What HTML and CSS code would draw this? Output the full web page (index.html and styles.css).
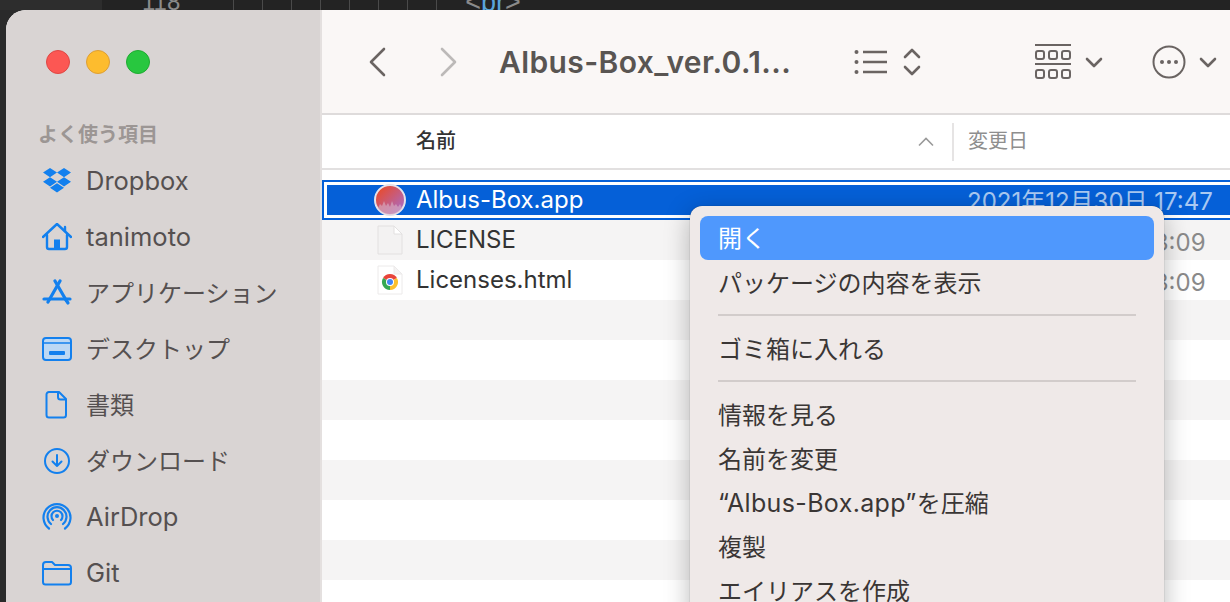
FILE: index.html
```html
<!DOCTYPE html>
<html lang="ja">
<head>
  <meta charset="UTF-8" />
  <title>Albus-Box_ver.0.1</title>
  <link rel="stylesheet" href="styles.css">
</head>
<body>

  <!-- editor behind the window, only its last line shows -->
  <div class="behind">
    <div class="gutter"></div>
    <span class="line-no">118</span>
    <span class="guides"><i></i><i></i><i></i><i></i><i></i><i></i><i></i><i></i></span>
    <span class="code">&lt;<b>br</b>&gt;</span>
  </div>

  <div class="window">
    <aside class="sidebar">
      <div class="lights">
        <span class="light red"></span>
        <span class="light yellow"></span>
        <span class="light green"></span>
      </div>
      <div class="side-title">よく使う項目</div>

      <div class="side-item latin">
        <svg class="side-icon" viewBox="0 0 30 28"><path fill="#1380ee" d="M8 1 15 5.600 8 10.200 1 5.600zM22 1 29 5.600 22 10.200 15 5.600zM8 10.200 15 14.800 8 19.400 1 14.800zM22 10.200 29 14.800 22 19.400 15 14.800zM15 16.200 22 20.800 15 25.400 8 20.800z"/></svg>
        <span class="label">Dropbox</span>
      </div>
      <div class="side-item latin">
        <svg class="side-icon" viewBox="0 0 30 28"><g fill="none" stroke="#1380ee" stroke-width="2.400" stroke-linecap="round" stroke-linejoin="round"><path d="M1 14 15 1 29 14"/><path d="M23 4v4"/><path d="M5 12v12a2 2 0 0 0 2 2h16a2 2 0 0 0 2-2V12"/></g><path fill="#1380ee" d="M12 16.500h6V26h-6z"/></svg>
        <span class="label">tanimoto</span>
      </div>
      <div class="side-item">
        <svg class="side-icon" viewBox="0 0 30 28"><g fill="none" stroke="#1380ee" stroke-width="3.200" stroke-linecap="round"><path d="M13 2 24 21"/><path d="M18 2 6 23"/><path d="M2 20h26"/><path d="M24 21l2 3"/></g></svg>
        <span class="label">アプリケーション</span>
      </div>
      <div class="side-item">
        <svg class="side-icon" viewBox="0 0 30 28"><rect x="1" y="3" width="28" height="22" rx="3" fill="#bcd8f4" stroke="#1380ee" stroke-width="2"/><path d="M2 8h26" stroke="#1380ee" stroke-width="1.500"/><rect x="7" y="16" width="16" height="4" rx="1" fill="#1380ee"/></svg>
        <span class="label">デスクトップ</span>
      </div>
      <div class="side-item">
        <svg class="side-icon" viewBox="0 0 30 28"><g fill="none" stroke="#1380ee" stroke-width="2" stroke-linejoin="round"><path d="M7 1h10l7 7v16a2.500 2.500 0 0 1-2.500 2.500h-14.500a2.500 2.500 0 0 1-2.500-2.500V3.500a2.500 2.500 0 0 1 2.500-2.500z"/><path d="M16 1v5a2.500 2.500 0 0 0 2.500 2.500H24"/></g></svg>
        <span class="label">書類</span>
      </div>
      <div class="side-item">
        <svg class="side-icon" viewBox="0 0 30 28"><g fill="none" stroke="#1380ee" stroke-width="2" stroke-linecap="round" stroke-linejoin="round"><circle cx="15" cy="14" r="12"/><path d="M15 8v11M10.500 14.500 15 19l4.500-4.500"/></g></svg>
        <span class="label">ダウンロード</span>
      </div>
      <div class="side-item latin">
        <svg class="side-icon" viewBox="0 0 30 28"><g fill="none" stroke="#1380ee" stroke-width="2.200" stroke-linecap="round"><path d="M7 25.500a13.500 13.500 0 1 1 16 0"/><path d="M9 21a9.500 9.500 0 1 1 12 0"/><path d="M11 17a5.500 5.500 0 1 1 8 0"/></g><circle cx="15" cy="13" r="2" fill="#1380ee"/></svg>
        <span class="label">AirDrop</span>
      </div>
      <div class="side-item latin">
        <svg class="side-icon" viewBox="0 0 30 28"><g fill="none" stroke="#1380ee" stroke-width="2" stroke-linejoin="round"><path d="M1 6a3 3 0 0 1 3-3h6l3 3h13a3 3 0 0 1 3 3v14a2.500 2.500 0 0 1-2.500 2.500h-23a2.500 2.500 0 0 1-2.500-2.500z"/><path d="M1 10h28"/></g></svg>
        <span class="label">Git</span>
      </div>
    </aside>

    <main class="main">
      <div class="toolbar">
        <svg class="tool nav-back" viewBox="0 0 18 30"><path d="M16 2 3 15l13 13"/></svg>
        <svg class="tool nav-next" viewBox="0 0 18 30"><path d="M2 2l13 13L2 28"/></svg>
        <div class="folder-title">Albus-Box_ver.0.1...</div>

        <svg class="tool-fill list-view" viewBox="0 0 34 26">
          <circle cx="2.500" cy="3" r="2"/><circle cx="2.500" cy="13" r="2"/><circle cx="2.500" cy="23" r="2"/>
          <path d="M9 1.800h24v2.400H9zM9 11.800h24v2.400H9zM9 21.800h24v2.400H9z"/>
        </svg>
        <svg class="tool updown" viewBox="0 0 18 30"><path d="M2 10l7-7 7 7M2 20l7 7 7-7"/></svg>

        <svg class="tool-fill grid-view" viewBox="0 0 36 36">
          <path d="M0 0h36v2H0zM0 19h36v2H0z"/>
          <g fill="none" stroke="#6a6462" stroke-width="2">
            <rect x="1" y="7" width="8" height="8" rx="2"/><rect x="14" y="7" width="8" height="8" rx="2"/><rect x="27" y="7" width="8" height="8" rx="2"/>
            <rect x="1" y="26" width="8" height="8" rx="2"/><rect x="14" y="26" width="8" height="8" rx="2"/><rect x="27" y="26" width="8" height="8" rx="2"/>
          </g>
        </svg>
        <svg class="tool chev first-chev" viewBox="0 0 18 12"><path d="M2 2l7 7 7-7"/></svg>

        <svg class="tool-fill more" viewBox="0 0 34 34">
          <circle cx="17" cy="17" r="15.500" fill="none" stroke="#6a6462" stroke-width="2"/>
          <circle cx="10" cy="17" r="2"/><circle cx="17" cy="17" r="2"/><circle cx="24" cy="17" r="2"/>
        </svg>
        <svg class="tool chev last-chev" viewBox="0 0 18 12"><path d="M2 2l7 7 7-7"/></svg>
      </div>

      <div class="col-head">
        <div class="col-name">名前</div>
        <svg class="sort" viewBox="0 0 16 10"><path d="M1 8.500 8 1.500l7 7"/></svg>
        <div class="col-date">変更日</div>
      </div>

      <div class="rows">
        <div class="row selected">
          <div class="file-icon">
            <svg width="32" height="32" viewBox="0 0 32 32">
              <defs>
                <linearGradient id="appfill" x1="0" y1="0" x2="1" y2="1">
                  <stop offset="0.100" stop-color="#ea4a28"/>
                  <stop offset="0.900" stop-color="#a86cc8"/>
                </linearGradient>
              </defs>
              <circle cx="16" cy="16" r="15" fill="url(#appfill)" stroke="#e6e2ea" stroke-width="2"/>
              <path fill="#d9b3c4" opacity="0.600" d="M4 24l2-4 2 2 2-5 2 5 2-3 2 4 2-6 2 5 2-2 2 3 2-3 2 4a14 14 0 0 1-24 0z"/>
            </svg>
          </div>
          <div class="file-name">Albus-Box.app</div>
          <div class="file-date">2021年12月30日 17:47</div>
        </div>
        <div class="row odd">
          <div class="file-icon">
            <svg width="32" height="30" viewBox="0 0 32 30">
              <path d="M4 1h16l8 8v20H4z" fill="#f3f2f2" stroke="#e2e0e0"/>
              <path d="M20 1v8h8z" fill="#fff" stroke="#e2e0e0"/>
            </svg>
          </div>
          <div class="file-name">LICENSE</div>
          <div class="file-date">2021年11月13日 13:09</div>
        </div>
        <div class="row">
          <div class="file-icon">
            <svg width="32" height="30" viewBox="0 0 32 30">
              <path d="M4 1h16l8 8v20H4z" fill="#fff" stroke="#eceaea"/>
              <path d="M20 1v8h8z" fill="#f4f3f3" stroke="#eceaea"/>
              <path d="M16 17 9.070 13A8 8 0 0 1 22.930 13z" fill="#e8443a"/>
              <path d="M16 17 22.930 13A8 8 0 0 1 16 25z" fill="#fbc02d"/>
              <path d="M16 17 16 25A8 8 0 0 1 9.070 13z" fill="#35a853"/>
              <circle cx="16" cy="17" r="4" fill="#fff"/>
              <circle cx="16" cy="17" r="3" fill="#4285f4"/>
            </svg>
          </div>
          <div class="file-name">Licenses.html</div>
          <div class="file-date">2021年11月13日 13:09</div>
        </div>
        <div class="row odd"></div>
        <div class="row"></div>
        <div class="row odd"></div>
        <div class="row"></div>
        <div class="row odd"></div>
        <div class="row"></div>
        <div class="row odd"></div>
        <div class="row"></div>
      </div>

      <div class="menu">
        <div class="menu-item active">開く</div>
        <div class="menu-item">パッケージの内容を表示</div>
        <div class="menu-sep"></div>
        <div class="menu-item">ゴミ箱に入れる</div>
        <div class="menu-sep"></div>
        <div class="menu-item">情報を見る</div>
        <div class="menu-item">名前を変更</div>
        <div class="menu-item"><span class="menu-latin">“Albus-Box.app”</span>を圧縮</div>
        <div class="menu-item">複製</div>
        <div class="menu-item">エイリアスを作成</div>
      </div>
    </main>
  </div>

</body>
</html>
```

FILE: styles.css
```css
* {
  box-sizing: border-box;
}
html, body {
  height: 100%;
}
body {
  margin: 0;
  background: #2a2a2a;
  font-family: Inter, "Noto Sans CJK JP", sans-serif;
  overflow: hidden;
}

/* editor strip */
.behind {
  height: 10px;
  display: flex;
  align-items: flex-end;
  overflow: hidden;
  background: #232323;
  font-family: "Liberation Sans", sans-serif;
  font-size: 24px;
  color: #8b8b8b;
}
.gutter {
  width: 102px;
  height: 10px;
  flex-shrink: 0;
  background: #2d2d2d;
}
.line-no, .code {
  line-height: 28px;
  height: 28px;
  margin-bottom: -6px;
  flex-shrink: 0;
}
.line-no {
  margin-left: 40px;
}
.guides {
  display: flex;
  margin-left: 53px;
  align-self: stretch;
}
.guides i {
  width: 1px;
  margin-right: 28px;
  background: #4a4a4a;
}
.code {
  font-size: 27px;
  color: #8a8a8a;
}
.code b {
  font-weight: 400;
  color: #5aa5dc;
}

/* finder window */
.window {
  display: flex;
  height: 592px;
  margin-left: 6px;
  border-top-left-radius: 20px;
  overflow: hidden;
  background: #fff;
}
.sidebar {
  width: 316px;
  flex-shrink: 0;
  padding-left: 33px;
  background: #d9d4d3;
  border-right: 2px solid #e4e0df;
}
.lights {
  display: flex;
  gap: 16px;
  padding-top: 40px;
  margin-left: 7px;
}
.light {
  width: 24px;
  height: 24px;
  border-radius: 50%;
}
.light.red {
  background: #fc5753;
  border: 1px solid #df4744;
}
.light.yellow {
  background: #fdbc2e;
  border: 1px solid #de9f34;
}
.light.green {
  background: #28c73f;
  border: 1px solid #1fab31;
}
.side-title {
  margin-top: 47px;
  margin-left: -1px;
  font-size: 20px;
  line-height: 28px;
  font-weight: 700;
  color: #9c9694;
}
.side-item {
  display: flex;
  align-items: center;
  gap: 14px;
  height: 56px;
  font-size: 24px;
  color: #555050;
}
.side-title + .side-item {
  margin-top: 2px;
}
.side-item.latin {
  font-size: 25.500px;
}
.latin .label {
  padding-top: 2px;
}
.side-icon {
  width: 30px;
  height: 28px;
  margin-left: 3px;
  margin-top: 4px;
  flex-shrink: 0;
}

/* right side */
.main {
  position: relative;
  flex: 1;
  min-width: 0;
}
.toolbar {
  display: flex;
  align-items: center;
  height: 105px;
  background: #faf7f6;
  border-bottom: 2px solid #dedbdb;
  color: #595552;
}
.tool {
  fill: none;
  stroke: #6a6462;
  stroke-width: 2.600;
  stroke-linecap: round;
  stroke-linejoin: round;
  flex-shrink: 0;
}
.tool-fill {
  fill: #6a6462;
  flex-shrink: 0;
}
.nav-back {
  width: 18px;
  height: 30px;
  margin-left: 46px;
}
.nav-next {
  width: 18px;
  height: 30px;
  margin-left: 54px;
  stroke: #bcb9b8;
}
.folder-title {
  width: 340px;
  margin-left: 41px;
  font-size: 30px;
  font-weight: 600;
  letter-spacing: 0.400px;
  white-space: nowrap;
}
.list-view {
  width: 34px;
  height: 26px;
  margin-left: 15px;
}
.updown {
  width: 18px;
  height: 30px;
  margin-left: 15px;
}
.grid-view {
  width: 36px;
  height: 36px;
  margin-left: 114px;
}
.chev {
  width: 18px;
  height: 12px;
  margin-top: 2px;
}
.first-chev {
  margin-left: 14px;
}
.more {
  width: 34px;
  height: 34px;
  margin-left: 49px;
}
.last-chev {
  margin-left: 13px;
}

.col-head {
  display: flex;
  align-items: center;
  height: 55px;
  background: #fff;
  border-bottom: 2px solid #e2e0e0;
  font-size: 20px;
}
.col-name {
  width: 502px;
  margin-left: 94px;
  padding-bottom: 4px;
  font-weight: 500;
  color: #333;
}
.sort {
  width: 16px;
  height: 10px;
  fill: none;
  stroke: #9a9a9a;
  stroke-width: 1.600;
  flex-shrink: 0;
}
.col-date {
  height: 38px;
  line-height: 36px;
  margin-left: 18px;
  padding-left: 14px;
  border-left: 2px solid #e6e4e4;
  color: #8e8e8e;
}

.rows {
  padding-top: 10px;
}
.row {
  display: grid;
  grid-template-columns: 94px 551px 1fr;
  align-items: center;
  height: 40px;
  font-size: 24px;
  color: #333;
  white-space: nowrap;
}
.row.odd {
  background: #f5f4f4;
}
.row.selected {
  margin-right: -20px;
  background: #0560d8;
  box-shadow: inset 0 0 0 2px #0560d8, inset 0 0 0 5px #fff;
  color: #fff;
}
.file-icon {
  display: flex;
  align-items: center;
  justify-content: flex-end;
  padding-right: 10px;
}
.file-name {
  grid-column: 2;
  line-height: 28px;
  padding-left: 0;
}
.file-date {
  color: #8a8a8a;
}
.selected .file-date {
  color: #a9c9f2;
  padding-bottom: 2px;
}

/* context menu */
.menu {
  position: absolute;
  top: 196px;
  left: 368px;
  width: 474px;
  height: 420px;
  padding: 10px;
  background: #efe9e8;
  border-radius: 12px;
  box-shadow: 0 0 1px rgba(0, 0, 0, 0.5), 0 6px 26px rgba(0, 0, 0, 0.28);
}
.menu-item {
  height: 44px;
  line-height: 47px;
  padding-left: 18px;
  font-size: 24px;
  color: #3a3635;
  white-space: nowrap;
}
.menu-latin {
  font-size: 25px;
  letter-spacing: 0.350px;
}
.menu-item.active {
  background: #4f98fd;
  border-radius: 8px;
  line-height: 45px;
  color: #fff;
}
.menu-sep {
  height: 22px;
  margin: 0 18px;
  padding-top: 10px;
}
.menu-sep::after {
  content: "";
  display: block;
  height: 2px;
  background: #d2cccb;
}
```
